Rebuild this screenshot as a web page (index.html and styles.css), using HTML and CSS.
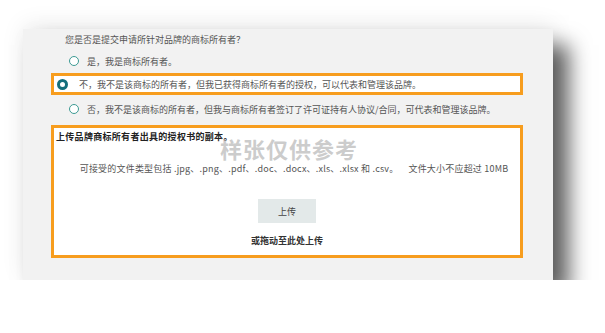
FILE: index.html
```html
<!DOCTYPE html>
<html lang="zh">
<head>
    <meta charset="UTF-8">
    <meta name="viewport" content="width=device-width, initial-scale=1.0">
    <title>品牌授权</title>
    <link rel="stylesheet" href="styles.css">
</head>
<body>
    <div class="card">
        <div class="question">您是否是提交申请所针对品牌的商标所有者？</div>

        <label class="option">
            <span class="radio"></span>
            <span>是，我是商标所有者。</span>
        </label>
        <label class="option selected">
            <span class="radio"></span>
            <span>不，我不是该商标的所有者，但我已获得商标所有者的授权，可以代表和管理该品牌。</span>
        </label>
        <label class="option">
            <span class="radio"></span>
            <span>否，我不是该商标的所有者，但我与商标所有者签订了许可证持有人协议/合同，可代表和管理该品牌。</span>
        </label>

        <div class="upload">
            <div class="upload-title">上传品牌商标所有者出具的授权书的副本。</div>
            <div class="watermark">样张仅供参考</div>
            <div class="file-info">
                <span>可接受的文件类型包括 .jpg、.png、.pdf、.doc、.docx、.xls、.xlsx 和 .csv。</span>
                <span>文件大小不应超过 10MB</span>
            </div>
            <button class="upload-btn">上传</button>
            <div class="drag-text">或拖动至此处上传</div>
        </div>
    </div>
</body>
</html>
```

FILE: styles.css
```css
body {
    margin: 0;
    background-color: #fff;
    font-family: "Noto Sans CJK SC", "Noto Sans", sans-serif;
    font-size: 9px;
    color: #555;
}

.card {
    margin: 29px 0 0 23px;
    width: 530px;
    height: 251px;
    box-sizing: border-box;
    padding: 4px 30px 0 28px;
    background-color: #f2f2f2;
    box-shadow: 16px 16px 20px rgba(0, 0, 0, 0.62), 0 -4px 22px rgba(0, 0, 0, 0.08);
}

.question {
    line-height: 14px;
    padding-left: 14px;
}

.option {
    display: flex;
    align-items: center;
    gap: 8px;
    height: 22px;
    box-sizing: border-box;
    padding-left: 15px;
    border: 3px solid transparent;
    margin-top: 3px;
}

.radio {
    width: 10px;
    height: 10px;
    box-sizing: border-box;
    border: 1.2px solid #3c9a93;
    border-radius: 50%;
    flex: 0 0 auto;
    background-color: #fff;
}

.option.selected {
    border-color: #f79d1e;
    background-color: #fff;
    padding-left: 3px;
    gap: 11px;
    margin-top: 1px;
}

.option.selected .radio {
    width: 11px;
    height: 11px;
    border: 3.5px solid #136e7b;
}

.upload {
    position: relative;
    margin-top: 5px;
    height: 133px;
    box-sizing: border-box;
    border: 3px solid #f79d1e;
    background-color: #fff;
    padding: 2px 2px 0;
    display: flex;
    flex-direction: column;
    align-items: center;
}

.upload-title {
    align-self: flex-start;
    line-height: 14px;
    font-weight: bold;
    color: #222;
    letter-spacing: 0.3px;
}

.watermark {
    position: absolute;
    left: 166px;
    top: 7px;
    font-size: 22px;
    line-height: 26px;
    font-weight: bold;
    letter-spacing: 1px;
    color: rgba(170, 170, 170, 0.6);
}

.file-info {
    margin-top: 18px;
    line-height: 14px;
    display: flex;
    gap: 10px;
    padding-left: 14px;
    letter-spacing: 0.2px;
}

.upload-btn {
    margin-top: 23px;
    width: 58px;
    height: 24px;
    border: none;
    background-color: #e3e9e9;
    color: #444;
    font-family: inherit;
    font-size: 9px;
}

.drag-text {
    margin-top: 11px;
    line-height: 14px;
    font-weight: bold;
    color: #333;
}
```
